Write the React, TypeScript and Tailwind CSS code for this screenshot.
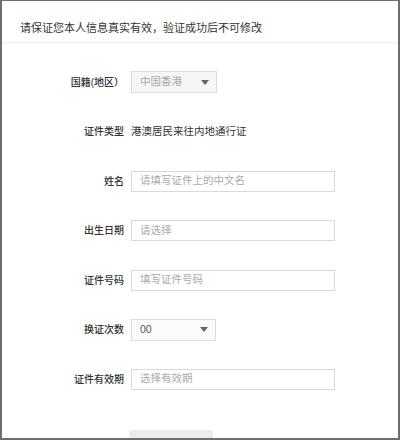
import { ReactNode } from "react"

const font = { fontFamily: '"Liberation Sans", "Noto Sans CJK SC", sans-serif' }

function Row({ label, children }: { label: string; children: ReactNode }) {
  return (
    <div className="flex h-[22px] items-center">
      <div className="w-[122px] shrink-0 text-right text-[10px] font-medium text-[#333]">{label}</div>
      <div className="ml-[7px] flex items-center">{children}</div>
    </div>
  )
}

function TextInput({ placeholder }: { placeholder: string }) {
  return (
    <div className="flex h-[21px] w-[204px] items-center border border-[#d9d9d9] bg-white pl-[8px] text-[10.5px] text-[#aaa]">
      {placeholder}
    </div>
  )
}

function Select({ value, muted }: { value: string; muted?: boolean }) {
  return (
    <div
      className={
        muted
          ? "flex h-[22px] w-[86px] items-center justify-between border border-[#dcdcdc] bg-[#f6f6f6] pl-[8px] pr-[7px] text-[10.5px] text-[#aaa]"
          : "flex h-[22px] w-[85px] items-center justify-between border border-[#dcdcdc] bg-[#fbfbfb] pl-[8px] pr-[7px] text-[10.5px] text-[#555]"
      }
    >
      <span>{value}</span>
      <svg width="8" height="5" viewBox="0 0 8 5">
        <path d="M0 0h8L4 5z" fill="#666" />
      </svg>
    </div>
  )
}

export default function App() {
  return (
    <div
      className="box-border h-[440px] w-[400px] overflow-hidden border-x-2 border-t border-b-2 border-[#6e6e6e] bg-white"
      style={font}
    >
      <div className="border-b border-[#eeeeee] pb-[6px] pl-[18px] pt-[19px] text-[11px] leading-[16px] text-[#333]">
        请保证您本人信息真实有效，验证成功后不可修改
      </div>

      <div className="flex flex-col gap-[27.5px] pt-[28px]">
        <Row label="国籍(地区）">
          <Select value="中国香港" muted />
        </Row>
        <Row label="证件类型">
          <span className="text-[10.5px] text-[#333]">港澳居民来往内地通行证</span>
        </Row>
        <Row label="姓名">
          <TextInput placeholder="请填写证件上的中文名" />
        </Row>
        <Row label="出生日期">
          <TextInput placeholder="请选择" />
        </Row>
        <Row label="证件号码">
          <TextInput placeholder="填写证件号码" />
        </Row>
        <Row label="换证次数">
          <Select value="00" />
        </Row>
        <Row label="证件有效期">
          <TextInput placeholder="选择有效期" />
        </Row>
      </div>

      <div className="ml-[127px] mt-[40px] h-[30px] w-[84px] rounded-[2px] bg-[#ecebf3]" />
    </div>
  )
}
